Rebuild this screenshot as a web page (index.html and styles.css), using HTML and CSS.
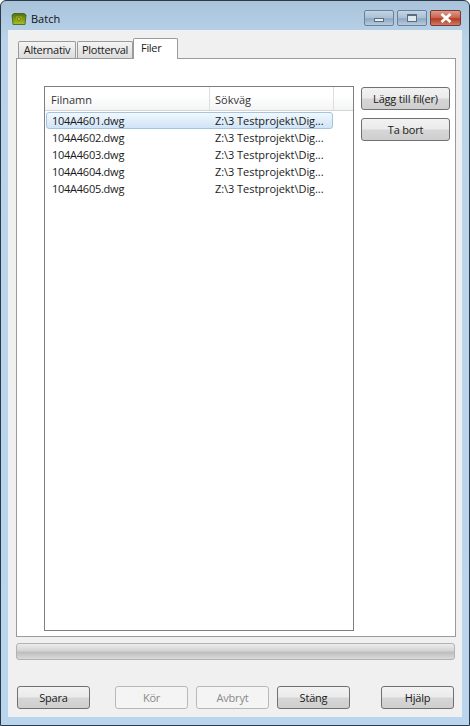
FILE: index.html
```html
<!DOCTYPE html>
<html lang="sv">
  <head>
    <meta charset="UTF-8" />
    <title>Batch</title>
    <link rel="stylesheet" href="styles.css">
  </head>
  <body>
    <div class="window">
      <!-- Titelrad -->
      <div class="titlebar">
        <svg class="app-icon" width="16" height="12" viewBox="0 0 16 12">
          <defs>
            <linearGradient id="box" x1="0" y1="0" x2="0" y2="1">
              <stop offset="0" stop-color="#4f6f0c"/>
              <stop offset="1" stop-color="#a6c422"/>
            </linearGradient>
          </defs>
          <path d="M1 2 L3 0.5 H13 L15 2 L14 11.5 H2 Z" fill="url(#box)" stroke="#3f5a0a" stroke-width="0.8"/>
          <path d="M5 3.5 H11 L10.5 9 H5.5 Z" fill="#8fae1c"/>
          <circle cx="8" cy="6" r="1.6" fill="#e0a92a" stroke="#6b5a10" stroke-width="0.6"/>
        </svg>
        <span class="title">Batch</span>
        <div class="caption-buttons">
          <div class="caption-btn"><span class="glyph-min"></span></div>
          <div class="caption-btn"><span class="glyph-max"></span></div>
          <div class="caption-btn close">
            <svg width="14" height="10" viewBox="0 0 14 10">
              <path d="M2.5 1 L11.5 9 M11.5 1 L2.5 9" stroke="#fff" stroke-width="2.8" fill="none"/>
            </svg>
          </div>
        </div>
      </div>

      <div class="client">
        <!-- Flikar -->
        <div class="tabs">
          <div class="tab">Alternativ</div>
          <div class="tab">Plotterval</div>
          <div class="tab active">Filer</div>
        </div>

        <div class="panel">
          <div class="list">
            <div class="list-head">
              <div class="col-name">Filnamn</div>
              <div class="col-path">Sökväg</div>
              <div class="col-rest"></div>
            </div>
            <div class="rows">
              <div class="row selected"><span class="cell-name">104A4601.dwg</span><span class="cell-path">Z:\3 Testprojekt\Dig...</span></div>
              <div class="row"><span class="cell-name">104A4602.dwg</span><span class="cell-path">Z:\3 Testprojekt\Dig...</span></div>
              <div class="row"><span class="cell-name">104A4603.dwg</span><span class="cell-path">Z:\3 Testprojekt\Dig...</span></div>
              <div class="row"><span class="cell-name">104A4604.dwg</span><span class="cell-path">Z:\3 Testprojekt\Dig...</span></div>
              <div class="row"><span class="cell-name">104A4605.dwg</span><span class="cell-path">Z:\3 Testprojekt\Dig...</span></div>
            </div>
          </div>
          <div class="side">
            <button class="btn wide">Lägg till fil(er)</button>
            <button class="btn wide">Ta bort</button>
          </div>
        </div>

        <div class="progress"></div>

        <!-- Knappar -->
        <div class="footer">
          <button class="btn">Spara</button>
          <div class="group">
            <button class="btn" disabled>Kör</button>
            <button class="btn" disabled>Avbryt</button>
            <button class="btn">Stäng</button>
          </div>
          <button class="btn help">Hjälp</button>
        </div>
      </div>
    </div>
  </body>
</html>
```

FILE: styles.css
```css
html, body {
  margin: 0;
  background: #fff;
}
body {
  font-family: "Open Sans", Tahoma, sans-serif;
  font-size: 11px;
  color: #1a1a1a;
}
.window {
  width: 470px;
  height: 726px;
  box-sizing: border-box;
  border: 1px solid #2b3a46;
  border-radius: 6px 6px 0 0;
  background: linear-gradient(#a9c3da, #b9d3ea 40px, #b9d6ee);
  display: flex;
  flex-direction: column;
  padding: 0 7px 8px;
}
/* Titelrad */
.titlebar {
  height: 29px;
  flex: none;
  display: flex;
  align-items: center;
  margin-left: 3px;
}
.app-icon {
  margin-top: 6px;
}
.title {
  margin-left: 4px;
  margin-top: 6px;
  font-size: 11px;
  color: #111;
}
.caption-buttons {
  margin-left: auto;
  margin-right: 1px;
  margin-top: 4px;
  display: flex;
  gap: 3px;
}
.caption-btn {
  width: 30px;
  height: 16px;
  box-sizing: border-box;
  border: 1px solid #6d8196;
  border-radius: 2px;
  background: linear-gradient(#c3d5e6, #a9bfd4 50%, #8ea8c0 55%, #b7cbdd);
  display: flex;
  align-items: center;
  justify-content: center;
}
.caption-btn.close {
  width: 31px;
  border-color: #7a3a30;
  background: linear-gradient(#dc9a8c, #c9604c 50%, #b03a24 55%, #cf7a62);
}
.glyph-min {
  width: 10px;
  height: 4px;
  margin-top: 4px;
  box-sizing: border-box;
  background: #e8eef4;
  border: 1px solid #5b6e80;
}
.glyph-max {
  width: 10px;
  height: 8px;
  box-sizing: border-box;
  background: #dfe8f0;
  border: 1px solid #5b6e80;
  border-top-width: 2px;
}
.client {
  flex: 1;
  background: #f0f0f0;
  padding-left: 8px;
}
/* Flikar */
.tabs {
  display: flex;
  align-items: flex-end;
  height: 28px;
  padding-left: 2px;
  gap: 1px;
  letter-spacing: -0.3px;
}
.tab {
  height: 17px;
  box-sizing: border-box;
  width: 58px;
  text-align: center;
  line-height: 15px;
  border: 1px solid #9a9a9a;
  border-bottom: 0;
  border-radius: 2px 2px 0 0;
  background: linear-gradient(#f4f4f4, #dcdcdc);
}
.tab + .tab {
  width: 56px;
}
.tab.active {
  width: 45px;
  height: 21px;
  line-height: 17px;
  text-align: left;
  padding-left: 7px;
  margin-left: -1px;
  margin-bottom: -1px;
  background: #fff;
  position: relative;
}
.panel {
  width: 440px;
  height: 579px;
  box-sizing: border-box;
  border: 1px solid #9a9a9a;
  background: #fff;
  padding: 27px 0 0 27px;
  display: flex;
  align-items: flex-start;
}
.list {
  width: 310px;
  height: 545px;
  flex: none;
  box-sizing: border-box;
  border: 1px solid #7f7f7f;
}
.list-head {
  height: 24px;
  box-sizing: border-box;
  display: flex;
  line-height: 25px;
  border-bottom: 1px solid #d5d5d5;
  background: linear-gradient(#fff 40%, #f3f4f5);
  color: #333;
}
.col-name {
  width: 165px;
  padding-left: 6px;
  box-sizing: border-box;
  border-right: 1px solid #dedede;
}
.col-path {
  width: 124px;
  padding-left: 5px;
  box-sizing: border-box;
  border-right: 1px solid #dedede;
}
.col-rest {
  flex: 1;
}
.rows {
  padding: 1px 0 0 1px;
}
.row {
  width: 287px;
  height: 17px;
  box-sizing: border-box;
  display: flex;
  line-height: 15px;
  border: 1px solid transparent;
}
.row.selected {
  border-color: #a5c4e0;
  border-radius: 3px;
  background: linear-gradient(#f2f8fd, #cfe4f7);
}
.cell-name {
  width: 168px;
  padding-left: 5px;
  box-sizing: border-box;
  letter-spacing: -0.25px;
}
.cell-path {
  white-space: nowrap;
  letter-spacing: -0.05px;
}
.side {
  margin-left: 7px;
  margin-top: 1px;
  display: flex;
  flex-direction: column;
  gap: 8px;
}
.btn {
  width: 73px;
  height: 23px;
  padding: 0 0 1px;
  box-sizing: border-box;
  font: inherit;
  letter-spacing: -0.2px;
  color: #1a1a1a;
  border: 1px solid #707070;
  border-radius: 3px;
  background: linear-gradient(#f2f2f2, #ebebeb 48%, #d6d6d6 52%, #cfcfcf);
}
.btn.wide {
  width: 89px;
}
.btn:disabled {
  border-color: #b8b8b8;
  background: #f4f4f4;
  color: #8a8a8a;
}
.progress {
  width: 439px;
  height: 17px;
  box-sizing: border-box;
  margin-top: 6px;
  border: 1px solid #b2b2b2;
  border-radius: 3px;
  background: linear-gradient(#ececec, #d4d4d4 45%, #bdbdbd 55%, #dadada);
}
.footer {
  margin-top: 26px;
  padding-left: 1px;
  width: 437px;
  display: flex;
}
.group {
  margin-left: 25px;
  display: flex;
  gap: 8px;
}
.help {
  margin-left: auto;
}
```
